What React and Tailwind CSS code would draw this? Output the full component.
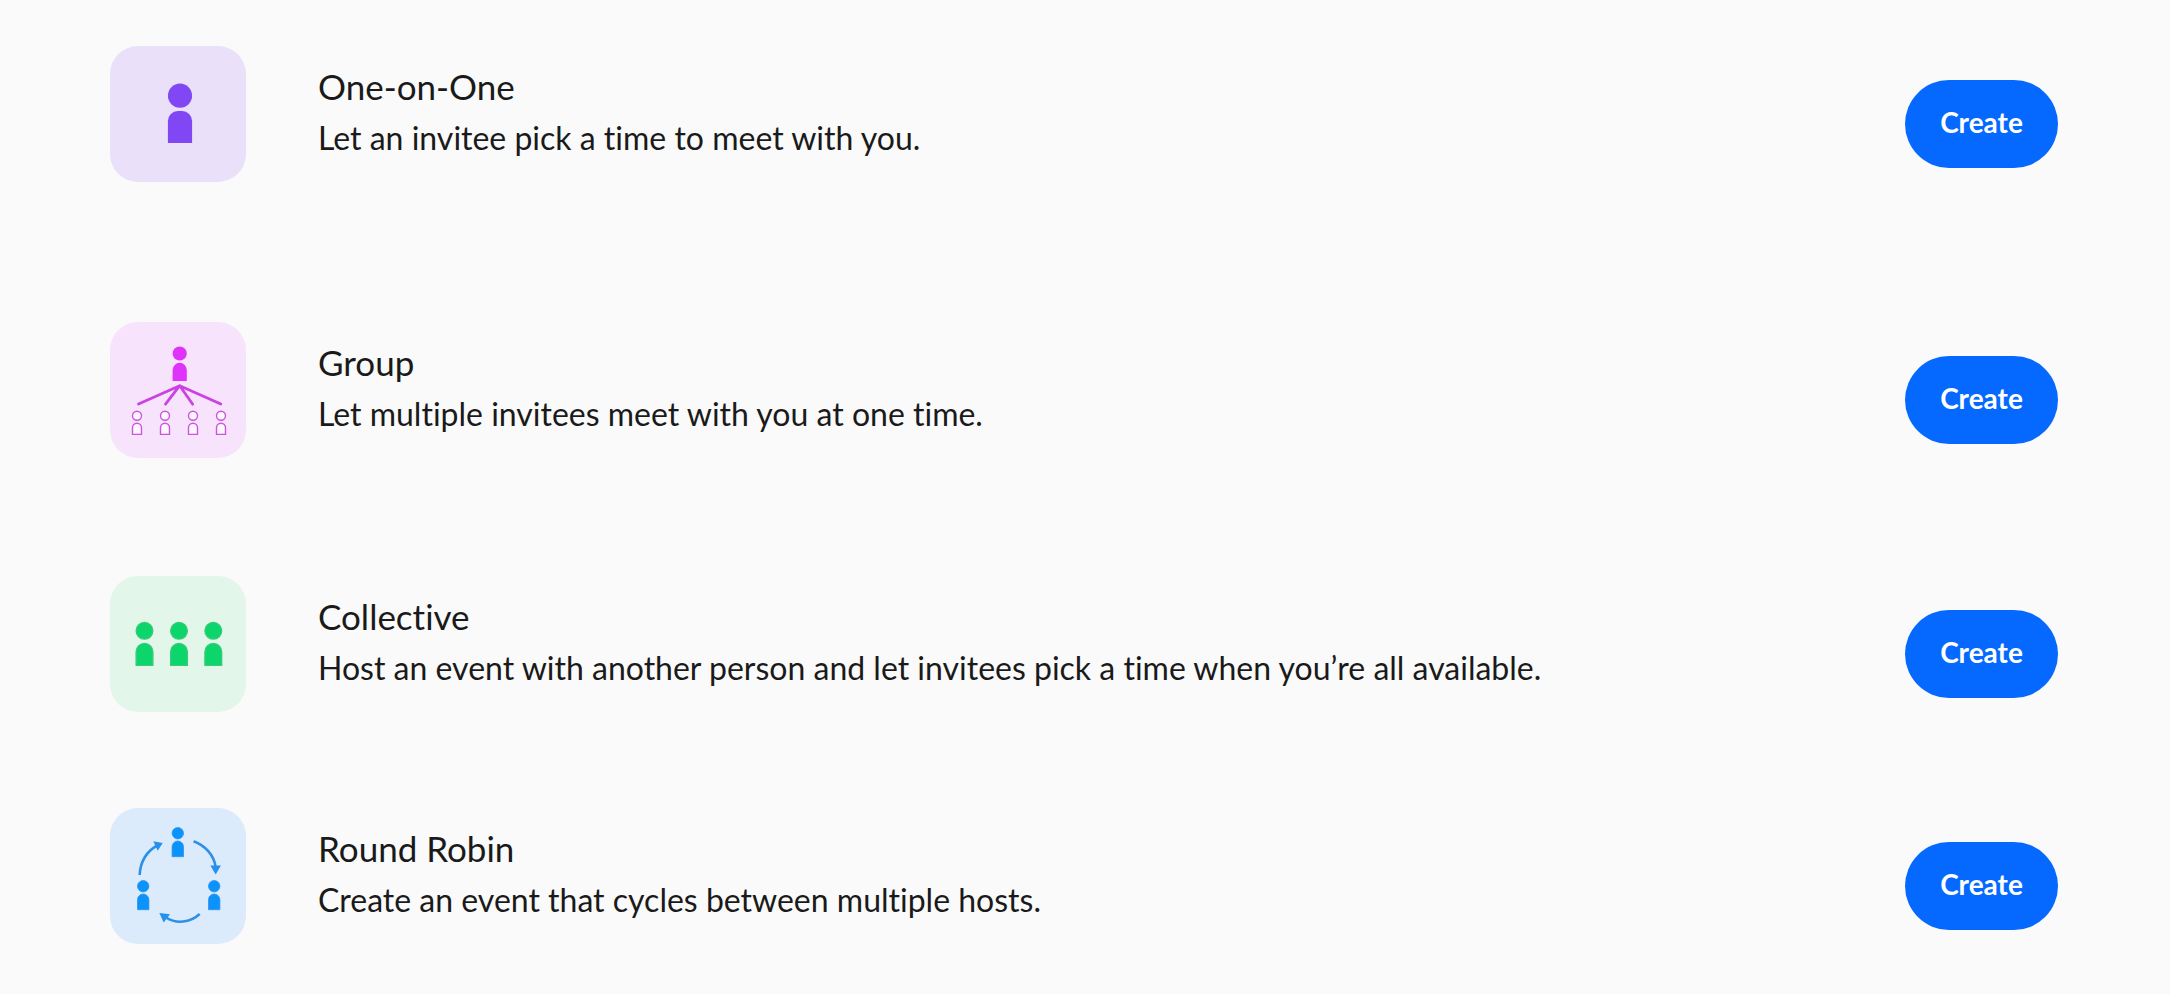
import clsx from 'clsx'

// A head with a round-shouldered body, centred on x, head centre at y
function Person({ x, y, r, top, bottom, shoulder = r, ...props }) {
  const left = x - r
  const right = x + r
  return (
    <g {...props}>
      <circle cx={x} cy={y} r={r} />
      <path
        d={`M${left} ${bottom}V${top + shoulder}a${shoulder} ${shoulder} 0 0 1 ${shoulder} ${-shoulder}H${right - shoulder}a${shoulder} ${shoulder} 0 0 1 ${shoulder} ${shoulder}V${bottom}Z`}
      />
    </g>
  )
}

function OneOnOneIcon() {
  return <Person x={70} y={49.7} r={12.1} top={65} bottom={97} shoulder={10} fill="#8247f5" />
}

function GroupIcon() {
  return (
    <>
      <Person x={69.7} y={31.5} r={7.1} top={40.8} bottom={59} fill="#df33fb" />
      <path
        d="M28.5 82L69.7 63.7L110.8 82M55.5 82.2L69.7 63.7L82.7 82.2"
        fill="none"
        stroke="#cb42e2"
        strokeWidth="2.8"
        strokeLinecap="round"
        strokeLinejoin="round"
      />
      {[27, 55, 83, 111].map(x => (
        <Person key={x} x={x} y={93.7} r={4.5} top={101.2} bottom={112.4} fill="#fdf6ff" stroke="#cb55dc" strokeWidth="1.4" />
      ))}
    </>
  )
}

function CollectiveIcon() {
  return [34.5, 69, 103.3].map(x => (
    <Person key={x} x={x} y={54.8} r={8.4} top={67.4} bottom={89.3} fill="#0bd56b" stroke="#38cb78" strokeWidth="1.3" />
  ))
}

function RoundRobinIcon() {
  return (
    <>
      {[[67.8, 25.2], [33.2, 78.2], [104.2, 78.2]].map(([x, y]) => (
        <Person key={x} x={x} y={y} r={5.7} top={y + 7.8} bottom={y + 23.5} fill="#0c93fb" stroke="#2b94ee" strokeWidth="0.8" />
      ))}
      <g fill="none" stroke="#2d90e6" strokeWidth="2.6">
        <path d="M29.7 67C30 54 37 42.5 47.5 37.5" />
        <path d="M83.6 33.3C95 37.5 104 47 105.6 59" />
        <path d="M89.7 106C80 115 66 116 56 109.5" />
      </g>
      <g fill="#2491f0">
        <path d="M43.3 33.3L52.7 35L47.7 42.7Z" />
        <path d="M100.3 57.5H110.9L105.7 66.5Z" />
        <path d="M49.3 105L60 106.3L53.7 114.5Z" />
      </g>
    </>
  )
}

const eventTypes = [
  {
    id: 'one-on-one',
    name: 'One-on-One',
    description: 'Let an invitee pick a time to meet with you.',
    Icon: OneOnOneIcon,
    tile: 'bg-[#eae0fa]',
    spacing: 'pb-[140px]',
  },
  {
    id: 'group',
    name: 'Group',
    description: 'Let multiple invitees meet with you at one time.',
    Icon: GroupIcon,
    tile: 'bg-[#f8e3fd]',
    spacing: 'pb-[118px]',
  },
  {
    id: 'collective',
    name: 'Collective',
    description: 'Host an event with another person and let invitees pick a time when you’re all available.',
    Icon: CollectiveIcon,
    tile: 'bg-[#e2f6ea]',
    spacing: 'pb-24',
  },
  {
    id: 'round-robin',
    name: 'Round Robin',
    description: 'Create an event that cycles between multiple hosts.',
    Icon: RoundRobinIcon,
    tile: 'bg-[#dcebfc]',
    spacing: 'pb-0',
  },
]

function App() {
  return (
    <main className="min-h-screen bg-[#fafafa] pt-[46px] pr-28 pb-12 pl-[110px] font-['Lato',sans-serif] text-[#1a1a1a] [font-variant-ligatures:none]">
      <ul>
        {eventTypes.map(({ id, name, description, Icon, tile, spacing }) => (
          <li key={id} className={clsx('flex items-start', spacing)}>
            <div className={clsx('size-[136px] shrink-0 rounded-[28px]', tile)}>
              <svg viewBox="0 0 136 136" className="size-full" aria-hidden="true">
                <Icon />
              </svg>
            </div>
            <div className="ml-18 flex-1 pt-[18px]">
              <h2 id={id} className="text-[35px] leading-[44px]">{name}</h2>
              <p className="pt-2 text-[32px] leading-[44px]">{description}</p>
            </div>
            <div className="shrink-0 pt-[34px]">
              <button
                type="button"
                aria-describedby={id}
                className="h-[88px] w-[153px] rounded-full bg-[#0569ff] pb-1 text-[28px] leading-9 font-bold text-white"
              >
                Create
              </button>
            </div>
          </li>
        ))}
      </ul>
    </main>
  )
}

export default App
